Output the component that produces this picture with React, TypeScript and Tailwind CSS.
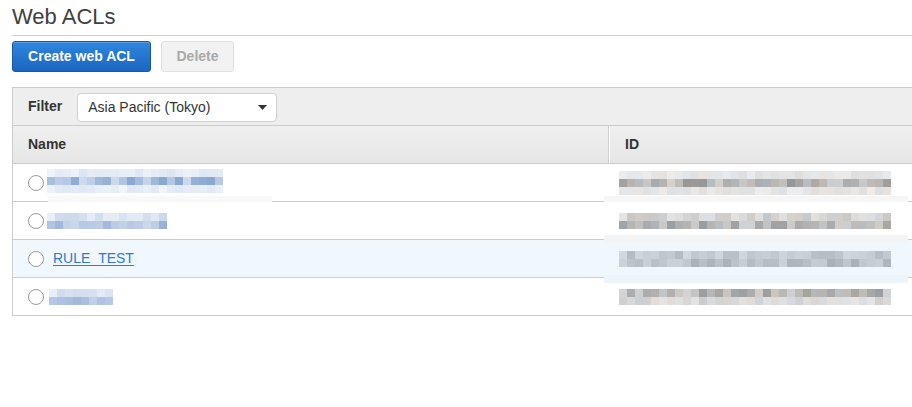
import React from "react";

function rng(seed: number) {
  let s = seed;
  return () => {
    s = (s * 16807) % 2147483647;
    return (s - 1) / 2147483646;
  };
}

type MosaicProps = {
  cols: number;
  rows: number[];
  palette: "blue" | "gray" | "bluegray";
  seed: number;
  cell?: number;
};

function Mosaic({ cols, rows, palette, seed, cell = 8 }: MosaicProps) {
  const r = rng(seed);
  const rects: React.ReactNode[] = [];
  rows.forEach((lvl, ri) => {
    for (let c = 0; c < cols; c++) {
      const v = Math.min(1, Math.max(0, lvl * (0.45 + r() * 0.75)));
      let col: string;
      if (palette === "blue") {
        const R = Math.round(250 - v * 110);
        const G = Math.round(252 - v * 85);
        const B = Math.round(255 - v * 45);
        col = `rgb(${R},${G},${B})`;
      } else if (palette === "gray") {
        const g = Math.round(246 - v * 100);
        const tint = Math.round((r() - 0.5) * 10);
        col = `rgb(${g + tint},${g},${g - tint})`;
      } else {
        const g = Math.round(232 - v * 70);
        col = `rgb(${g - 6},${g + 2},${g + 8})`;
      }
      rects.push(
        <rect key={`${ri}-${c}`} x={c * cell} y={ri * cell} width={cell} height={cell} fill={col} />
      );
    }
  });
  return (
    <svg width={cols * cell} height={rows.length * cell} className="block" shapeRendering="crispEdges">
      {rects}
    </svg>
  );
}

function Radio() {
  return <span className="block w-4 h-4 rounded-full border border-[#9a9a9a] bg-white shrink-0" />;
}

type Row = {
  name: React.ReactNode;
  id: React.ReactNode;
  selected?: boolean;
};

export default function App() {
  const rowsData: Row[] = [
    {
      name: (
        <div className="ml-[3px] -mt-[3px]">
          <Mosaic cols={22} rows={[0.25, 0.9, 0.2]} palette="blue" seed={11} />
        </div>
      ),
      id: <Mosaic cols={34} rows={[0.2, 0.8, 0.2]} palette="gray" seed={23} />,
    },
    {
      name: (
        <div className="ml-[3px]">
          <Mosaic cols={15} rows={[0.35, 0.75]} palette="blue" seed={37} />
        </div>
      ),
      id: <Mosaic cols={34} rows={[0.4, 0.75]} palette="gray" seed={41} />,
    },
    {
      name: (
        <a className="ml-[9px] text-[14px] text-[#2f7bd0] underline underline-offset-[2px]" href="#">
          RULE_TEST
        </a>
      ),
      id: <Mosaic cols={34} rows={[0.55, 0.7]} palette="bluegray" seed={53} />,
      selected: true,
    },
    {
      name: (
        <div className="ml-[5px]">
          <Mosaic cols={8} rows={[0.35, 0.75]} palette="blue" seed={67} />
        </div>
      ),
      id: <Mosaic cols={34} rows={[0.75, 0.35]} palette="gray" seed={79} />,
    },
  ];

  return (
    <div className="w-[912px] h-[407px] overflow-hidden bg-white pl-3 font-['Liberation_Sans',Arial,sans-serif] text-[#333]">
      <div className="h-[36px] pt-[6px] border-b border-[#cfcfcf]">
        <h1 className="text-[22px] leading-[22px] text-[#404040]">Web ACLs</h1>
      </div>

      <div className="mt-[5px] flex gap-[10px]">
        <button className="h-[31px] w-[139px] rounded-[3px] border border-[#1b57a0] bg-gradient-to-b from-[#2f86e0] to-[#1b66c0] text-white text-[14px] font-bold shadow-[inset_0_1px_0_rgba(255,255,255,0.2)]">
          Create web ACL
        </button>
        <button className="h-[31px] w-[73px] rounded-[3px] border border-[#e0e0e0] bg-[#f2f2f2] text-[#a9a9a9] text-[14px] font-bold">
          Delete
        </button>
      </div>

      <div className="relative mt-[15px] w-[900px] border-t border-l border-b border-[#cccccc]">
        <div className="h-[38px] bg-[#eeeeee] border-b border-[#cccccc] flex items-center pl-[15px]">
          <span className="text-[14px] font-bold text-[#333]">Filter</span>
          <div className="ml-[15px] mt-[1px] h-[29px] w-[200px] bg-white border border-[#d0d0d0] rounded-[4px] flex items-center pl-[10px] pr-[9px]">
            <span className="text-[14px] text-[#333] flex-1">Asia Pacific (Tokyo)</span>
            <svg width="9" height="5" viewBox="0 0 9 5">
              <path d="M0 0 L9 0 L4.5 5 Z" fill="#333" />
            </svg>
          </div>
        </div>

        <div className="h-[38px] flex bg-gradient-to-b from-[#efefef] to-[#e6e6e6] border-b border-[#cccccc]">
          <div className="w-[596px] flex items-center pl-[15px] border-r border-[#cfcfcf]">
            <span className="text-[14px] font-bold text-[#333]">Name</span>
          </div>
          <div className="flex-1 flex items-center pl-[15px] border-l border-white">
            <span className="text-[14px] font-bold text-[#333]">ID</span>
          </div>
        </div>

        {rowsData.map((row, i) => (
          <div
            key={i}
            className={`flex ${i < rowsData.length - 1 ? "h-[38px] border-b border-[#cccccc]" : "h-[37px]"} ${
              row.selected ? "bg-[#f1f8fd]" : "bg-white"
            }`}
          >
            <div className="w-[598px] flex items-center pl-[15px]">
              <Radio />
              {row.name}
            </div>
            <div className="flex-1 flex items-center pl-[8px]">{row.id}</div>
          </div>
        ))}

        <div className="absolute left-[35px] top-[108px] h-[6px] w-[224px] bg-[#f8f8f8]" />
        <div className="absolute left-[591px] top-[108px] h-[6px] w-[304px] bg-[#f6f6f6]" />
        <div className="absolute left-[591px] top-[147px] h-[8px] w-[304px] bg-[#f2f4f6]" />
        <div className="absolute left-[591px] top-[187px] h-[8px] w-[304px] bg-[#eef5fa]" />
      </div>
    </div>
  );
}
